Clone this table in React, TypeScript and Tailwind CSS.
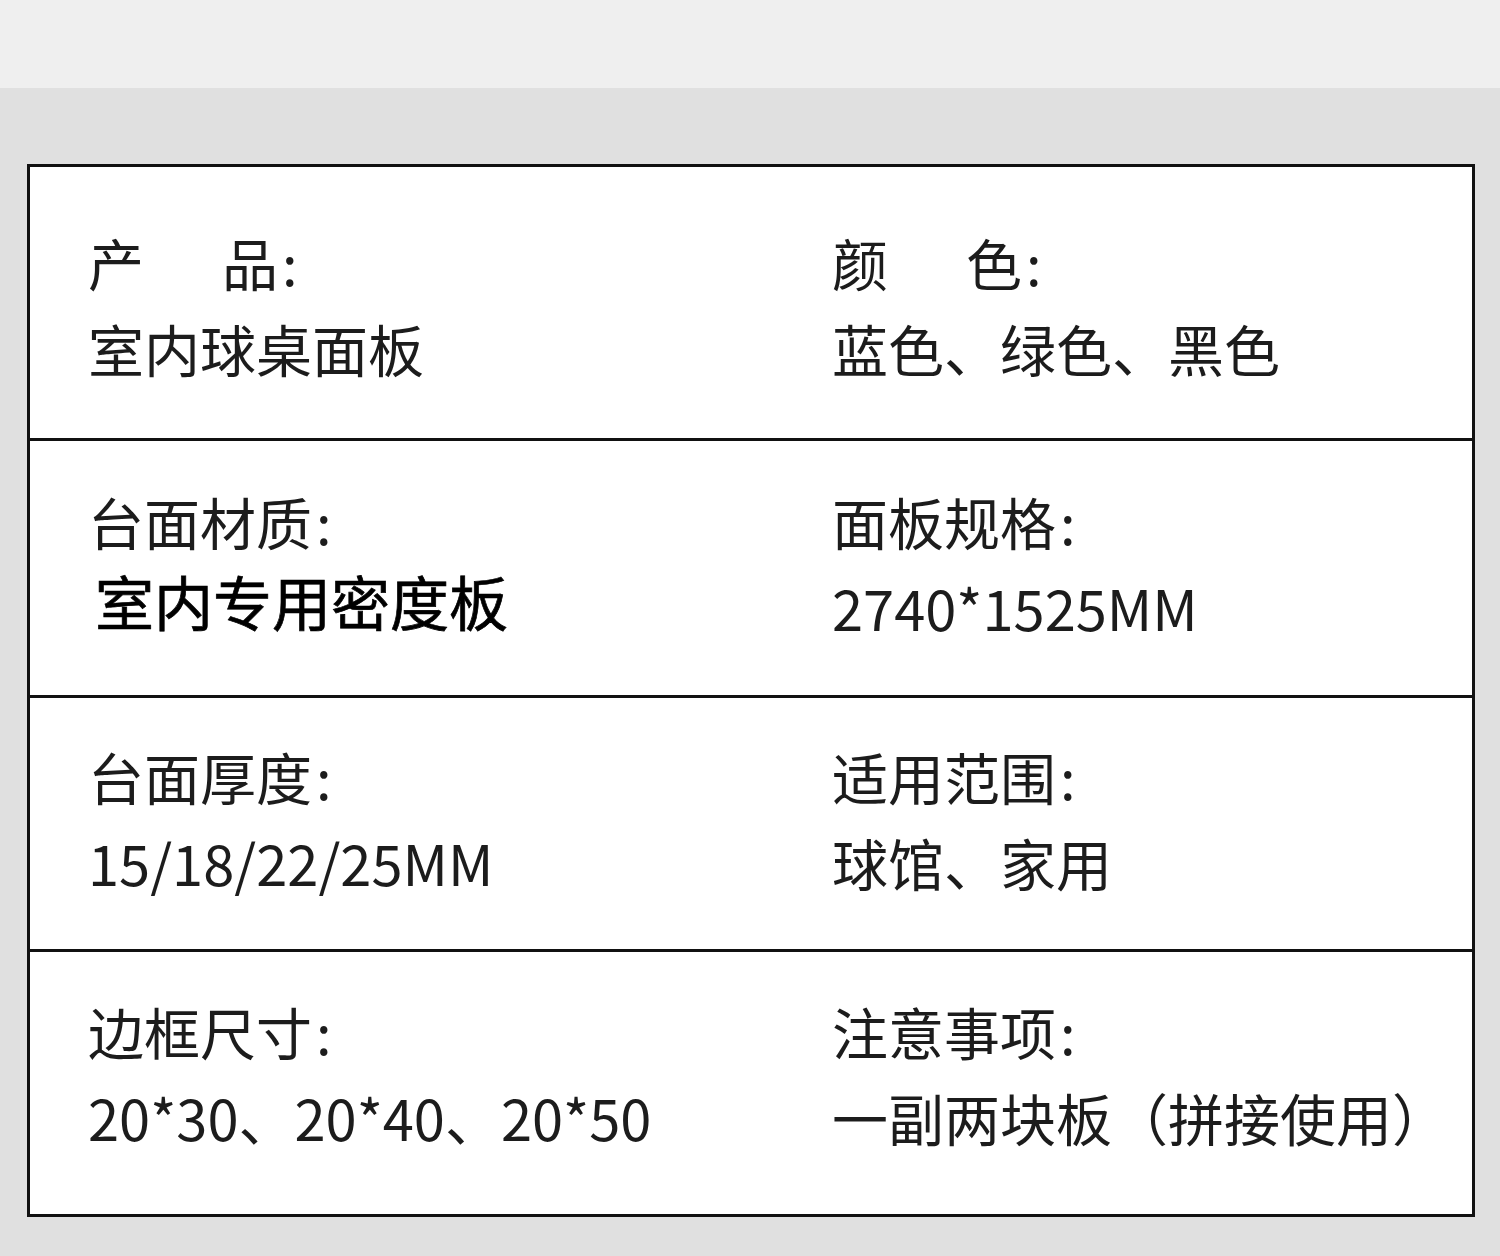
import React from 'react';

interface Cell {
  label: React.ReactNode;
  value: React.ReactNode;
  valueClass?: string;
}

interface Row {
  height: string;
  padTop: string;
  left: Cell;
  right: Cell;
  last?: boolean;
}

const spaced = (a: string, b: string) => (
  <>
    {a}
    <span className="inline-block w-[78px]" />
    {b}
  </>
);

const rows: Row[] = [
  {
    height: 'h-[274px]',
    padTop: 'pt-[67px]',
    left: { label: spaced('产', '品'), value: '室内球桌面板' },
    right: { label: spaced('颜', '色'), value: '蓝色、绿色、黑色' },
  },
  {
    height: 'h-[257px]',
    padTop: 'pt-[52px]',
    left: {
      label: '台面材质',
      value: '室内专用密度板',
      valueClass:
        'ml-[7px] -mt-[6px] text-[59px] text-black [-webkit-text-stroke:0.7px_black]',
    },
    right: { label: '面板规格', value: '2740*1525MM' },
  },
  {
    height: 'h-[254px]',
    padTop: 'pt-[50px]',
    left: { label: '台面厚度', value: '15/18/22/25MM' },
    right: { label: '适用范围', value: '球馆、家用' },
  },
  {
    height: 'h-[262px]',
    padTop: 'pt-[51px]',
    left: { label: '边框尺寸', value: '20*30、20*40、20*50' },
    right: { label: '注意事项', value: '一副两块板（拼接使用）' },
    last: true,
  },
];

const InfoCell: React.FC<{ cell: Cell }> = ({ cell }) => (
  <div className="flex flex-col">
    <div className="text-[56px] leading-[56px] whitespace-nowrap">
      {cell.label}
      <span className="ml-[4px]">:</span>
    </div>
    <div className="mt-[30px]">
      <div
        className={`leading-[56px] whitespace-nowrap ${
          cell.valueClass ?? 'text-[56px]'
        }`}
      >
        {cell.value}
      </div>
    </div>
  </div>
);

export default function App() {
  return (
    <div
      className="w-[1500px] h-[1256px] bg-[#e0e0e0] text-[#1c1c1c]"
      style={{ fontFamily: '"Noto Sans CJK SC", "Noto Sans", sans-serif' }}
    >
      <div className="h-[88px] bg-[#efefef]" />
      <div className="pt-[76px] pl-[27px]">
        <div className="w-[1448px] border-[3px] border-[#111] bg-white">
          {rows.map((row, i) => (
            <div
              key={i}
              className={`${row.height} ${row.padTop} pl-[58px] grid grid-cols-[744px_1fr] ${
                row.last ? '' : 'border-b-[3px] border-[#111]'
              }`}
            >
              <InfoCell cell={row.left} />
              <InfoCell cell={row.right} />
            </div>
          ))}
        </div>
      </div>
    </div>
  );
}
